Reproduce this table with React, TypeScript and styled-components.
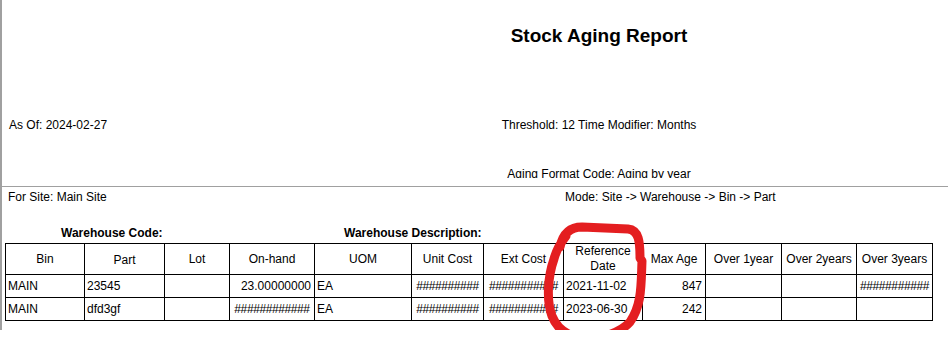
import styled, { createGlobalStyle } from "styled-components";

const GlobalStyle = createGlobalStyle`
  body {
    margin: 0;
    background: #fff;
    color: #000;
    font-family: "Liberation Sans", Arial, sans-serif;
    font-size: 12px;
  }
`;

const Page = styled.div`
  position: relative;
  width: 948px;
  height: 330px;
  box-sizing: border-box;
  border-left: 2px solid #a0a0a0;
`;

const ReportHeader = styled.header`
  height: 187px;
  box-sizing: border-box;
  padding-top: 25px;
  border-bottom: 1px solid #a0a0a0;
  display: grid;
  grid-template-columns: 248px 1fr;
  grid-template-rows: 22px 71px 14px 35px 11px;
  line-height: 14px;
`;

const Title = styled.h1`
  grid-column: 2;
  grid-row: 1;
  margin: 0;
  font-size: 19px;
  line-height: 22px;
  font-weight: bold;
  text-align: center;
`;

const Field = styled.div<{ $col: number; $row: number; $center?: boolean }>`
  grid-column: ${(p) => p.$col};
  grid-row: ${(p) => p.$row};
  padding-left: ${(p) => (p.$center ? 0 : 7)}px;
  text-align: ${(p) => (p.$center ? "center" : "left")};
  white-space: nowrap;
  overflow: hidden;
`;

const SiteRow = styled.div`
  display: grid;
  grid-template-columns: 563px 1fr;
  padding-top: 3px;
  line-height: 14px;

  & > span:first-child {
    padding-left: 6px;
  }
`;

const WarehouseRow = styled.div`
  display: grid;
  grid-template-columns: 283px 1fr;
  margin-top: 22px;
  padding-left: 59px;
  line-height: 14px;
  font-weight: bold;
`;

const Grid = styled.div`
  display: grid;
  grid-template-columns: 79px 80px 65px 85px 97px 72px 80px 79px 63px 76px 75px 76px;
  grid-template-rows: 31px 23px 23px;
  width: 928px;
  box-sizing: border-box;
  margin: 3px 0 0 3px;
  border-left: 1px solid #000;
  border-top: 1px solid #000;
`;

const HeadCell = styled.div<{ $nudge?: number }>`
  box-sizing: border-box;
  border-right: 1px solid #000;
  border-bottom: 1px solid #000;
  display: flex;
  align-items: center;
  justify-content: center;
  text-align: center;
  line-height: 15px;
  padding-top: ${(p) => p.$nudge ?? 0}px;
`;

const Cell = styled.div<{ $align?: "left" | "right" | "center"; $hash?: boolean }>`
  box-sizing: border-box;
  border-right: 1px solid #000;
  border-bottom: 1px solid #000;
  display: flex;
  align-items: center;
  justify-content: ${(p) =>
    p.$hash || p.$align === "center"
      ? "center"
      : p.$align === "right"
        ? "flex-end"
        : "flex-start"};
  padding: 0 ${(p) => (p.$align === "right" ? 3 : 2)}px 0 2px;
  line-height: 14px;
  white-space: nowrap;
  overflow: hidden;
  letter-spacing: ${(p) => (p.$hash ? "-0.4px" : "normal")};
`;

// hand-drawn marker ring laid over the report
const Annotation = styled.svg`
  position: absolute;
  top: 0;
  left: -2px;
  pointer-events: none;
`;

const hashes = (n: number) => "#".repeat(n);

const columns: { label: string; nudge?: number }[] = [
  { label: "Bin" },
  { label: "Part", nudge: 2 },
  { label: "Lot" },
  { label: "On-hand" },
  { label: "UOM" },
  { label: "Unit Cost", nudge: 1 },
  { label: "Ext Cost", nudge: 1 },
  { label: "Reference Date" },
  { label: "Max Age", nudge: 1 },
  { label: "Over 1year", nudge: 1 },
  { label: "Over 2years" },
  { label: "Over 3years", nudge: 1 },
];

type Row = {
  bin: string;
  part: string;
  lot: string;
  onHand: string;
  uom: string;
  unitCost: string;
  extCost: string;
  refDate: string;
  maxAge: string;
  over1: string;
  over2: string;
  over3: string;
};

const rows: Row[] = [
  {
    bin: "MAIN",
    part: "23545",
    lot: "",
    onHand: "23.00000000",
    uom: "EA",
    unitCost: hashes(10),
    extCost: hashes(11),
    refDate: "2021-11-02",
    maxAge: "847",
    over1: "",
    over2: "",
    over3: hashes(11),
  },
  {
    bin: "MAIN",
    part: "dfd3gf",
    lot: "",
    onHand: hashes(12),
    uom: "EA",
    unitCost: hashes(10),
    extCost: hashes(11),
    refDate: "2023-06-30",
    maxAge: "242",
    over1: "",
    over2: "",
    over3: "",
  },
];

const isHash = (v: string) => v.startsWith("#");

export default function App() {
  return (
    <>
      <GlobalStyle />
      <Page>
        <ReportHeader>
          <Title>Stock Aging Report</Title>
          <Field $col={1} $row={3}>
            As Of: 2024-02-27
          </Field>
          <Field $col={2} $row={3} $center>
            Threshold: 12 Time Modifier: Months
          </Field>
          <Field $col={2} $row={5} $center>
            Aging Format Code: Aging by year
          </Field>
        </ReportHeader>

        <SiteRow>
          <span>For Site: Main Site</span>
          <span>Mode: Site -&gt; Warehouse -&gt; Bin -&gt; Part</span>
        </SiteRow>

        <WarehouseRow>
          <span>Warehouse Code:</span>
          <span>Warehouse Description:</span>
        </WarehouseRow>

        <Grid>
          {columns.map((c) => (
            <HeadCell key={c.label} $nudge={c.nudge}>
              {c.label}
            </HeadCell>
          ))}
          {rows.map((r, i) => (
            <Row key={i} row={r} />
          ))}
        </Grid>

        <Annotation width="948" height="345" viewBox="0 0 948 345">
          <path
            d="M 560 247 C 563 233, 571 227, 582 227 L 628 229 C 639 230, 640 242, 640 258 L 642 261 C 641 285, 642 305, 630 322 C 620 333, 602 338, 588 338 C 571 338, 558 331, 552 316 C 546 300, 548 276, 554 259 C 556 251, 559 245, 566 236"
            fill="none"
            stroke="#e41e20"
            strokeWidth="9"
            strokeLinecap="round"
            strokeLinejoin="round"
          />
        </Annotation>
      </Page>
    </>
  );
}

function Row({ row }: { row: Row }) {
  const numeric = (v: string) => (isHash(v) ? { $hash: true } : { $align: "right" as const });
  return (
    <>
      <Cell>{row.bin}</Cell>
      <Cell>{row.part}</Cell>
      <Cell>{row.lot}</Cell>
      <Cell {...numeric(row.onHand)}>{row.onHand}</Cell>
      <Cell>{row.uom}</Cell>
      <Cell {...numeric(row.unitCost)}>{row.unitCost}</Cell>
      <Cell {...numeric(row.extCost)}>{row.extCost}</Cell>
      <Cell>{row.refDate}</Cell>
      <Cell {...numeric(row.maxAge)}>{row.maxAge}</Cell>
      <Cell {...numeric(row.over1)}>{row.over1}</Cell>
      <Cell {...numeric(row.over2)}>{row.over2}</Cell>
      <Cell {...numeric(row.over3)}>{row.over3}</Cell>
    </>
  );
}
